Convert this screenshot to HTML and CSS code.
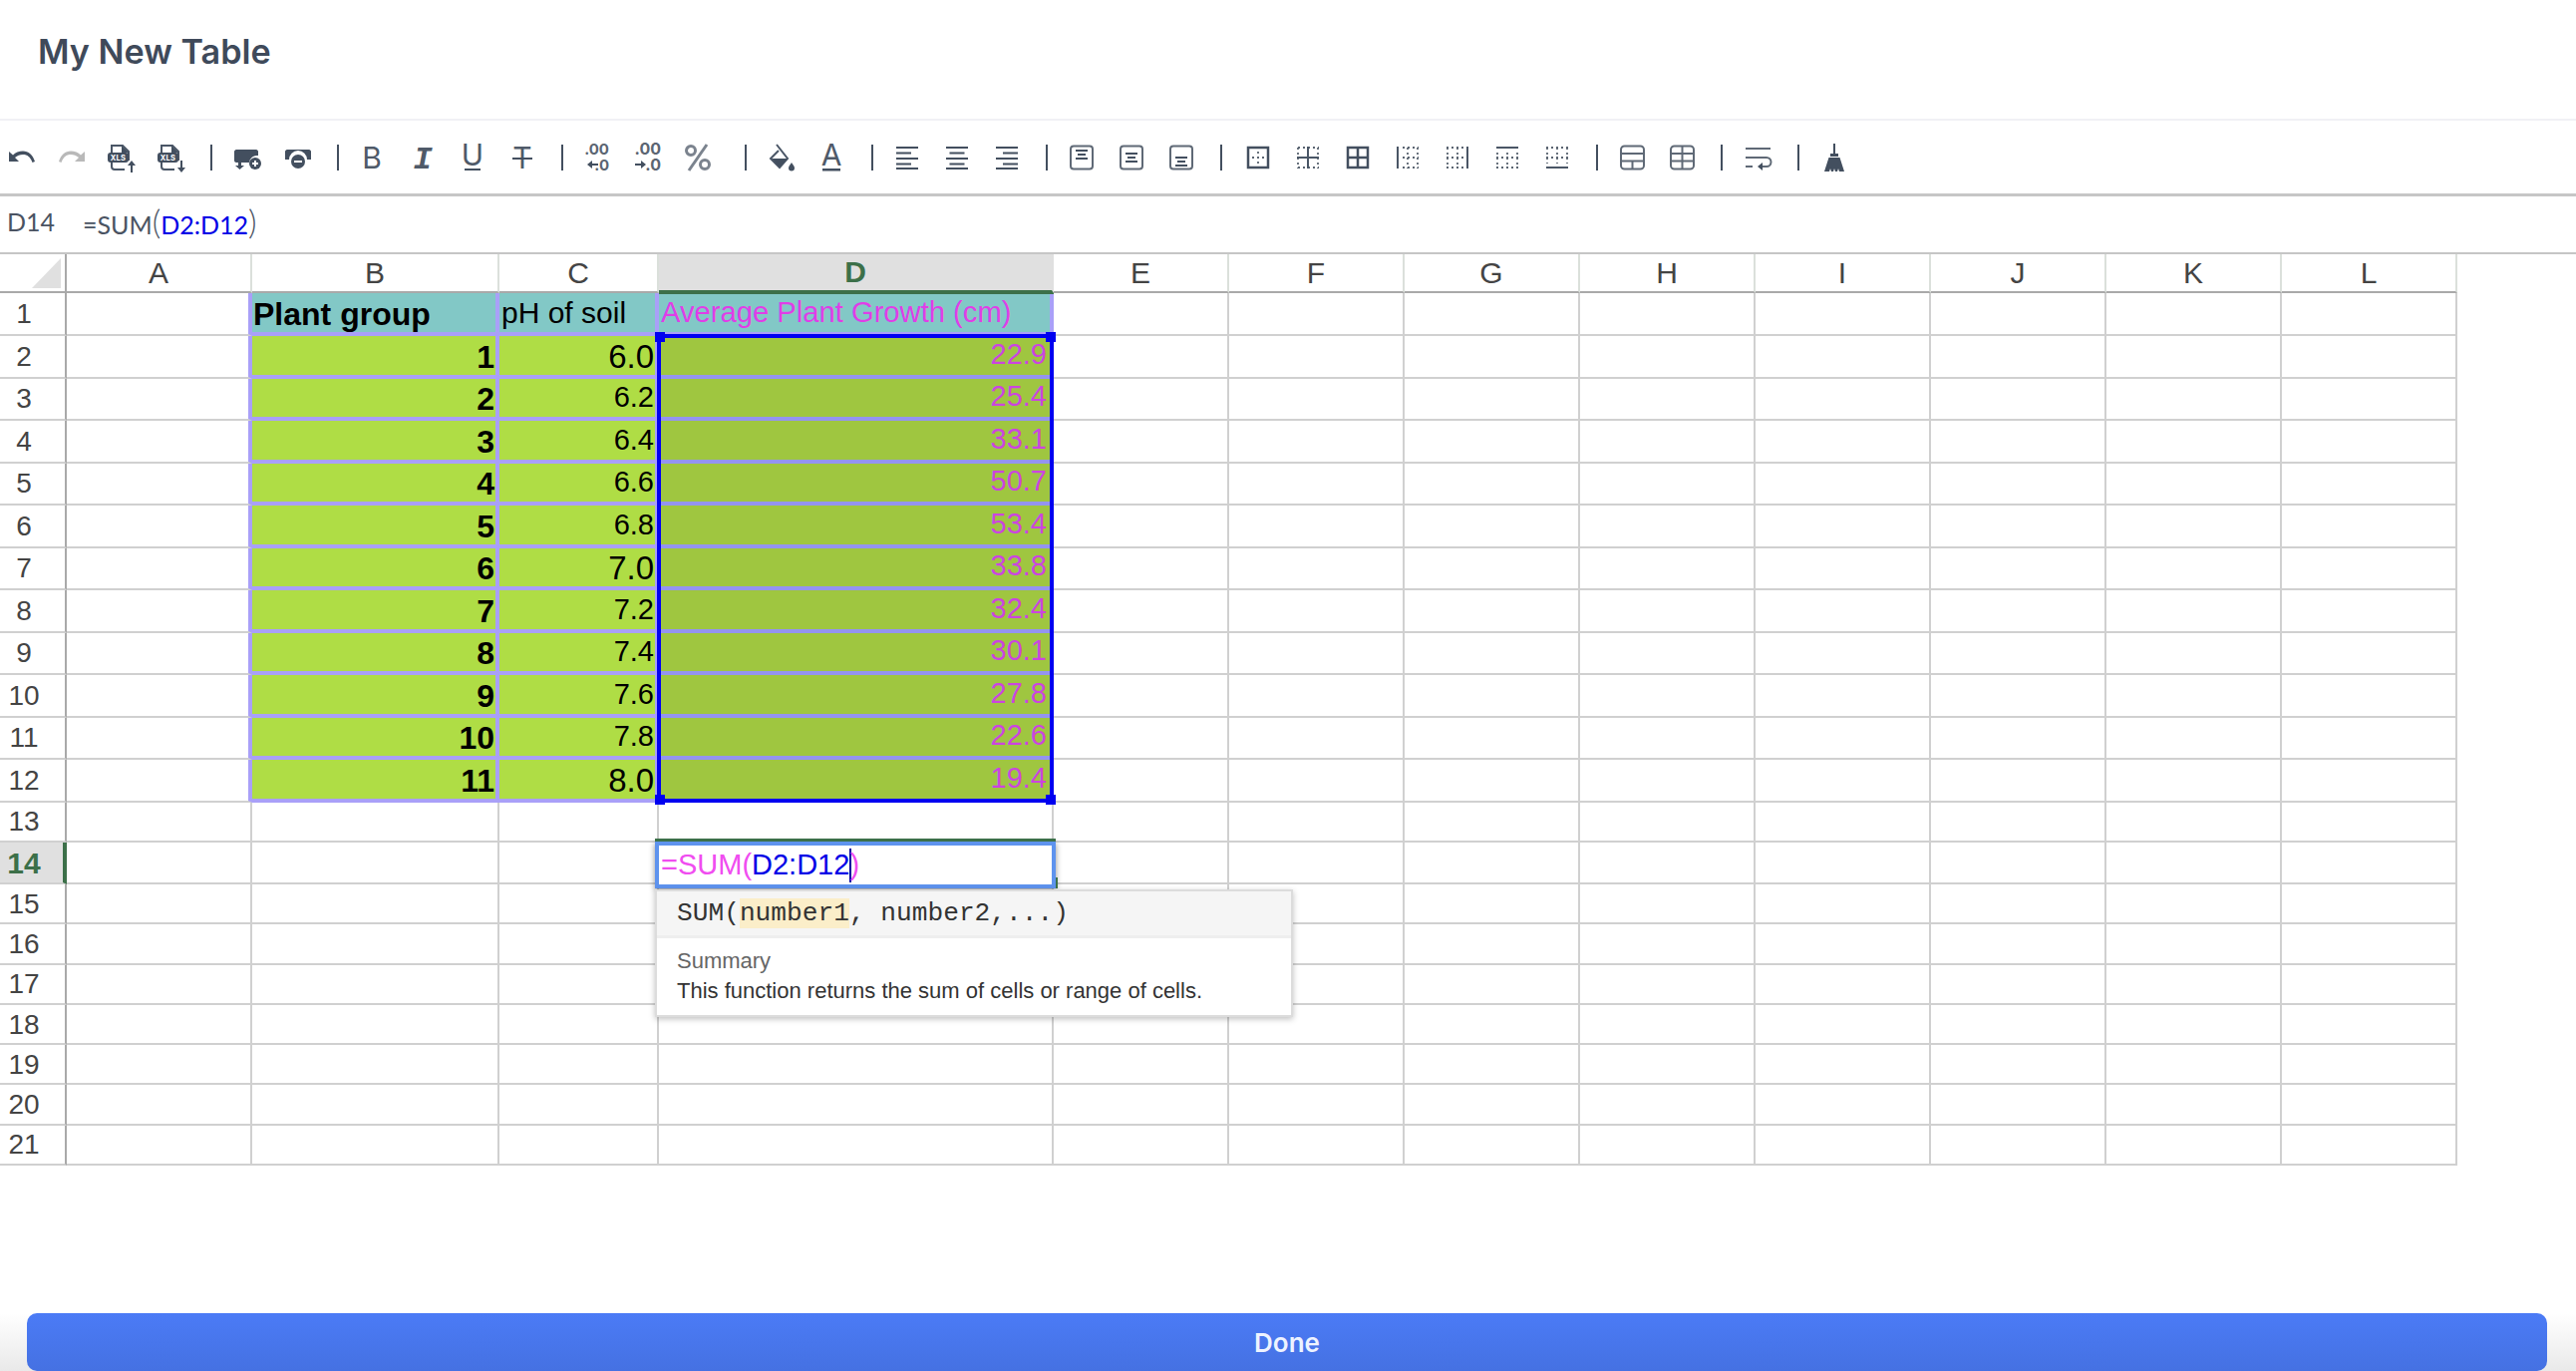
FILE: index.html
```html
<!DOCTYPE html>
<html lang="en">
<head>
<meta charset="utf-8">
<title>My New Table</title>
<link rel="stylesheet" href="styles.css">
</head>
<body>
<header class="title-bar"><h1 class="title">My New Table</h1></header>

<div class="toolbar">
  <span class="tool"><svg class="ic" viewBox="0 0 30 30"><path d="M2 9v10h10l-4-4c2.500-2 5-3 8-3 4.500 0 7.500 2.500 9.500 8l2.500-1c-2-6.500-6.500-10.500-12-10.500-4 0-7.500 1.500-10 4z"/></svg></span>
  <span class="tool"><svg class="ic off" viewBox="0 0 30 30"><path d="M28 9v10H18l4-4c-2.500-2-5-3-8-3-4.500 0-7.500 2.500-9.500 8L2 19c2-6.500 6.500-10.500 12-10.500 4 0 7.500 1.500 10 4z"/></svg></span>
  <span class="tool"><svg class="ic" viewBox="0 0 30 30"><path class="st" d="M5 10V3h11l6 6v9M5 19v5c0 2 1 3 3 3h10"/><path d="M15 3v7h7z"/><rect x="1" y="10" width="21" height="10" rx="3"/><text class="xls" x="11.500" y="18">XLS</text><path d="M25 18l4 5h-3v7h-2v-7h-3z"/></svg></span>
  <span class="tool"><svg class="ic" viewBox="0 0 30 30"><path class="st" d="M5 10V3h11l6 6v9M5 19v5c0 2 1 3 3 3h10"/><path d="M15 3v7h7z"/><rect x="1" y="10" width="21" height="10" rx="3"/><text class="xls" x="11.500" y="18">XLS</text><path d="M24 18h2v7h3l-4 5-4-5h3z"/></svg></span>
  <span class="sep sep-wide"></span>
  <span class="tool"><svg class="ic" viewBox="0 0 30 30"><path d="M1 9c0-1 1-2 2-2h20c1 0 2 1 2 2v4a8 8 0 0 0-9 7H8v3h3l-4.500 4L2 23h3v-3H3c-1 0-2-1-2-2z"/><circle cx="22" cy="21" r="6"/><path class="wt" d="M19 21h6M22 18v6"/></svg></span>
  <span class="tool"><svg class="ic" viewBox="0 0 30 30"><path d="M2 9c0-1 1-2 2-2h22c1 0 2 1 2 2v8h-4a9 9 0 0 0-18 0H2z"/><circle cx="15" cy="19" r="7"/><path class="wt" d="M11 19h8"/></svg></span>
  <span class="sep sep-narrow"></span>
  <span class="tool"><svg class="ic" viewBox="0 0 30 30"><text class="glyph" x="14" y="26">B</text></svg></span>
  <span class="tool"><svg class="ic" viewBox="0 0 30 30"><text class="glyph glyph-i" x="15" y="26">I</text></svg></span>
  <span class="tool"><svg class="ic" viewBox="0 0 30 30"><text class="glyph" x="15" y="23">U</text><path d="M7 26h16v2H7z"/></svg></span>
  <span class="tool"><svg class="ic" viewBox="0 0 30 30"><text class="glyph" x="15" y="26">T</text><path d="M5 15h20v2H5z"/></svg></span>
  <span class="sep"></span>
  <span class="tool"><svg class="ic" viewBox="0 0 30 30"><text class="dec" x="26" y="12">.00</text><text class="dec" x="26" y="28">.0</text><path d="M4 22l5-4v3h6v2H9v3z"/></svg></span>
  <span class="tool"><svg class="ic" viewBox="0 0 30 30"><text class="dec dec-b" x="28" y="12">.00</text><text class="dec dec-b" x="28" y="28">.0</text><path d="M13 22l-5 4v-3H2v-2h6v-3z"/></svg></span>
  <span class="tool"><svg class="ic pct" viewBox="0 0 30 30"><circle class="st2" cx="8" cy="8" r="4.500"/><circle class="st2" cx="22" cy="22" r="4.500"/><path class="st2" d="M24 2L6 28"/></svg></span>
  <span class="sep sep-gap"></span>
  <span class="tool"><svg class="ic" viewBox="0 0 30 30"><path class="st" d="M9 2l11 14-8 9-9-9 8-8"/><path d="M4 16h16l-8 9z"/><path d="M24 20c2 3 3 4 3 5.500a3 3 0 0 1-6 0c0-1.500 1-2.500 3-5.500z"/></svg></span>
  <span class="tool"><svg class="ic" viewBox="0 0 30 30"><text class="glyph" x="14" y="23">A</text><path d="M5 26h18v2.500H5z"/></svg></span>
  <span class="sep sep-narrow"></span>
  <span class="tool"><svg class="ic" viewBox="0 0 30 30"><path d="M4 4h22v2H4zM4 9.500h15v2H4zM4 15h22v2H4zM4 20.500h15v2H4zM4 25h22v2H4z"/></svg></span>
  <span class="tool"><svg class="ic" viewBox="0 0 30 30"><path d="M4 4h22v2H4zM7.500 9.500h15v2h-15zM4 15h22v2H4zM7.500 20.500h15v2h-15zM4 25h22v2H4z"/></svg></span>
  <span class="tool"><svg class="ic" viewBox="0 0 30 30"><path d="M4 4h22v2H4zM11 9.500h15v2H11zM4 15h22v2H4zM11 20.500h15v2H11zM4 25h22v2H4z"/></svg></span>
  <span class="sep sep-narrow"></span>
  <span class="tool"><svg class="ic" viewBox="0 0 30 30"><rect class="box" x="4" y="3.500" width="22" height="23" rx="3"/><path d="M9 7h12v2H9zM11 11h8v2h-8zM9 15h12v2H9z"/></svg></span>
  <span class="tool"><svg class="ic" viewBox="0 0 30 30"><rect class="box" x="4" y="3.500" width="22" height="23" rx="3"/><path d="M9 10h12v2H9zM11 14h8v2h-8zM9 18h12v2H9z"/></svg></span>
  <span class="tool"><svg class="ic" viewBox="0 0 30 30"><rect class="box" x="4" y="3.500" width="22" height="23" rx="3"/><path d="M9 14h12v2H9zM11 18h8v2h-8zM9 22h12v2H9z"/></svg></span>
  <span class="sep sep-wide"></span>
  <span class="tool"><svg class="ic" viewBox="0 0 30 30"><rect class="st3" x="5" y="5" width="20" height="20"/><path class="dots" d="M15 9v13M9 15h13"/></svg></span>
  <span class="tool"><svg class="ic" viewBox="0 0 30 30"><path class="dots" d="M5 5h21M5 25h21M5 5v21M25 5v21"/><path class="st" d="M15 4v22M4 15h22"/></svg></span>
  <span class="tool"><svg class="ic" viewBox="0 0 30 30"><rect class="st3" x="5" y="5" width="20" height="20"/><path class="st3" d="M15 5v20M5 15h20"/></svg></span>
  <span class="tool"><svg class="ic" viewBox="0 0 30 30"><path class="dots" d="M10 5h16M10 15h16M10 25h16M15 5v21M25 5v21"/><path class="st" d="M5 4v22"/></svg></span>
  <span class="tool"><svg class="ic" viewBox="0 0 30 30"><path class="dots" d="M4 5h17M4 15h17M4 25h17M5 5v21M15 5v21"/><path class="st" d="M25 4v22"/></svg></span>
  <span class="tool"><svg class="ic" viewBox="0 0 30 30"><path class="dots" d="M4 15h22M4 25h22M5 10v16M15 10v16M25 10v16"/><path class="st" d="M4 5h22"/></svg></span>
  <span class="tool"><svg class="ic" viewBox="0 0 30 30"><path class="dots" d="M4 5h22M4 15h22M5 5v16M15 5v16M25 5v16"/><path class="st" d="M4 25h22"/></svg></span>
  <span class="sep sep-narrow"></span>
  <span class="tool"><svg class="ic" viewBox="0 0 30 30"><rect class="box" x="4" y="3.500" width="23" height="23" rx="3.500"/><path class="box" d="M4 11h23M4 18.500h23M15.500 18.500v8"/></svg></span>
  <span class="tool"><svg class="ic" viewBox="0 0 30 30"><rect class="box" x="4" y="3.500" width="23" height="23" rx="3.500"/><path class="box" d="M4 11h23M4 18.500h23M15.500 3.500v23"/></svg></span>
  <span class="sep sep-wide"></span>
  <span class="tool"><svg class="ic" viewBox="0 0 30 30"><path class="box" d="M2 6h25M2 15h21a4 4 0 0 1 0 9h-6M2 24h7"/><path d="M19 20v8l-5-4z"/></svg></span>
  <span class="sep"></span>
  <span class="tool"><svg class="ic" viewBox="0 0 30 30"><path d="M14 1h2v11h-2zM11 11h8v3h-8zM9.500 15h11L25 29h-5l-1-3-1 3h-2l-1-3-1 3h-2l-1-3-1 3H5z"/></svg></span>
</div>

<div class="formula-bar">
  <span class="cell-ref">D14</span>
  <span class="formula">=SUM<span class="paren">(</span><span class="range">D2:D12</span><span class="paren">)</span></span>
</div>

<main class="sheet">
  <div class="corner"><svg class="corner-mark" viewBox="0 0 29 30"><path d="M29 0v30H0z"/></svg></div>
  <div class="ch">A</div><div class="ch">B</div><div class="ch">C</div><div class="ch ch-on">D</div><div class="ch">E</div><div class="ch">F</div><div class="ch">G</div><div class="ch">H</div><div class="ch">I</div><div class="ch">J</div><div class="ch">K</div><div class="ch">L</div>

  <div class="rh">1</div><div class="pe"></div><div class="t tb">Plant group</div><div class="t tc">pH of soil</div><div class="t tm">Average Plant Growth (cm)</div><div></div><div></div><div></div><div></div><div></div><div></div><div></div><div></div>
  <div class="rh">2</div><div class="pe"></div><div class="g b">1</div><div class="g n big">6.0</div><div class="s">22.9</div><div></div><div></div><div></div><div></div><div></div><div></div><div></div><div></div>
  <div class="rh">3</div><div class="pe"></div><div class="g b">2</div><div class="g n">6.2</div><div class="s">25.4</div><div></div><div></div><div></div><div></div><div></div><div></div><div></div><div></div>
  <div class="rh">4</div><div class="pe"></div><div class="g b">3</div><div class="g n">6.4</div><div class="s">33.1</div><div></div><div></div><div></div><div></div><div></div><div></div><div></div><div></div>
  <div class="rh">5</div><div class="pe"></div><div class="g b">4</div><div class="g n">6.6</div><div class="s">50.7</div><div></div><div></div><div></div><div></div><div></div><div></div><div></div><div></div>
  <div class="rh">6</div><div class="pe"></div><div class="g b">5</div><div class="g n">6.8</div><div class="s">53.4</div><div></div><div></div><div></div><div></div><div></div><div></div><div></div><div></div>
  <div class="rh">7</div><div class="pe"></div><div class="g b">6</div><div class="g n big">7.0</div><div class="s">33.8</div><div></div><div></div><div></div><div></div><div></div><div></div><div></div><div></div>
  <div class="rh">8</div><div class="pe"></div><div class="g b">7</div><div class="g n">7.2</div><div class="s">32.4</div><div></div><div></div><div></div><div></div><div></div><div></div><div></div><div></div>
  <div class="rh">9</div><div class="pe"></div><div class="g b">8</div><div class="g n">7.4</div><div class="s">30.1</div><div></div><div></div><div></div><div></div><div></div><div></div><div></div><div></div>
  <div class="rh">10</div><div class="pe"></div><div class="g b">9</div><div class="g n">7.6</div><div class="s">27.8</div><div></div><div></div><div></div><div></div><div></div><div></div><div></div><div></div>
  <div class="rh">11</div><div class="pe"></div><div class="g b">10</div><div class="g n">7.8</div><div class="s">22.6</div><div></div><div></div><div></div><div></div><div></div><div></div><div></div><div></div>
  <div class="rh">12</div><div class="pe"></div><div class="g b">11</div><div class="g n big">8.0</div><div class="s">19.4</div><div></div><div></div><div></div><div></div><div></div><div></div><div></div><div></div>
  <div class="rh">13</div><div></div><div></div><div></div><div></div><div></div><div></div><div></div><div></div><div></div><div></div><div></div><div></div>
  <div class="rh rh-on">14</div><div></div><div></div><div></div><div></div><div></div><div></div><div></div><div></div><div></div><div></div><div></div><div></div>
  <div class="rh">15</div><div></div><div></div><div></div><div></div><div></div><div></div><div></div><div></div><div></div><div></div><div></div><div></div>
  <div class="rh">16</div><div></div><div></div><div></div><div></div><div></div><div></div><div></div><div></div><div></div><div></div><div></div><div></div>
  <div class="rh">17</div><div></div><div></div><div></div><div></div><div></div><div></div><div></div><div></div><div></div><div></div><div></div><div></div>
  <div class="rh">18</div><div></div><div></div><div></div><div></div><div></div><div></div><div></div><div></div><div></div><div></div><div></div><div></div>
  <div class="rh">19</div><div></div><div></div><div></div><div></div><div></div><div></div><div></div><div></div><div></div><div></div><div></div><div></div>
  <div class="rh">20</div><div></div><div></div><div></div><div></div><div></div><div></div><div></div><div></div><div></div><div></div><div></div><div></div>
  <div class="rh">21</div><div></div><div></div><div></div><div></div><div></div><div></div><div></div><div></div><div></div><div></div><div></div><div></div>

  <span class="selection"><span class="h h1"></span><span class="h h2"></span><span class="h h3"></span><span class="h h4"></span></span>
  <span class="editor"><span class="fn">=SUM(</span><span class="rng">D2:D12</span><span class="caret"></span><span class="fn">)</span></span>
  <section class="popup">
    <div class="sig">SUM(<span class="arg">number1</span>, number2,...)</div>
    <div class="help"><p class="help-h">Summary</p><p class="help-t">This function returns the sum of cells or range of cells.</p></div>
  </section>
</main>

<footer class="footer"><button class="done">Done</button></footer>
</body>
</html>
```
FILE: styles.css
```css
html, body { margin: 0; height: 100%; }
body { display: flex; flex-direction: column; height: 1375px; overflow: hidden; background: #fff; font-family: "Liberation Sans", Arial, sans-serif; color: #000; }

.title-bar { height: 119px; flex: none; display: flex; align-items: center; padding-left: 38px; border-bottom: 2px solid #f1f1f5; }
.title { margin: 0 0 15px; font: 600 34.200px/1 Inter, "Liberation Sans", sans-serif; color: #3f4a5a; }

.toolbar { height: 73px; flex: none; display: flex; align-items: center; margin-left: -3px; border-bottom: 3px solid #c6c6c6; }
.tool { width: 50px; height: 30px; flex: none; display: flex; justify-content: center; }
.sep { width: 2px; height: 26px; flex: none; background: #434f5f; margin: 0 10px 0 14px; }
.sep-narrow { margin-right: 9px; }
.sep-wide { margin-right: 11px; }
.sep-gap { margin: 0 11px 0 22px; }

.ic { width: 30px; height: 30px; fill: #434f5f; overflow: visible; }
.ic.off { fill: #b9b9b9; }
.ic .st { fill: none; stroke: #4a5666; stroke-width: 2; }
.ic .st3 { fill: none; stroke: #434f5f; stroke-width: 2.500; }
.ic .st2 { fill: none; stroke: #7b838e; stroke-width: 3; }
.ic .box { fill: none; stroke: #5f6976; stroke-width: 2; }
.ic .wt { fill: none; stroke: #fff; stroke-width: 2; }
.ic .dots { fill: none; stroke: #5b6572; stroke-width: 1.800; stroke-dasharray: 2 3; }
.ic .xls { fill: #fff; font: 700 7.500px Inter, sans-serif; text-anchor: middle; letter-spacing: .3px; }
.ic .glyph { fill: #4f5a69; font: 400 30px Inter, sans-serif; text-anchor: middle; }
.ic .glyph-i { font: italic 700 32px "Liberation Mono", monospace; }
.ic .dec { fill: #5b6572; font: 700 15px Inter, sans-serif; text-anchor: end; }
.ic .dec-b { font-size: 16px; }

.formula-bar { height: 58px; box-sizing: border-box; flex: none; display: flex; align-items: center; padding: 0 0 6px 7px; border-bottom: 2px solid #c6c6c6; font: 400 25px Lato, sans-serif; color: #4a5362; }
.cell-ref { width: 76px; flex: none; }
.paren { font-size: 33px; font-weight: 300; }
.range { color: #0000e6; }

.sheet { position: relative; flex: none; display: grid; width: 2465px; grid-template-columns: 67px 186px 248px 160px 396px repeat(8, 176px); grid-template-rows: 39px 43px repeat(11, 42.500px) 40.500px 42px repeat(7, 40.300px); font-size: 29px; }
.sheet > div { box-sizing: border-box; min-width: 0; display: flex; align-items: center; white-space: nowrap; border-right: 2px solid #d0d0d0; border-bottom: 2px solid #d0d0d0; }

.sheet > .corner { position: relative; border-right-color: #a9a9a9; border-bottom-color: #a9a9a9; }
.corner-mark { position: absolute; left: 32px; top: 4px; width: 29px; height: 30px; fill: #e0e0e0; }
.sheet > .ch { justify-content: center; font-size: 30px; color: #444; border-right-color: #dbe0db; border-bottom-color: #a9a9a9; }
.sheet > .ch-on { position: relative; z-index: 1; font-weight: 700; color: #3c7049; background: #e0e0e0; border-right-color: #e0e0e0; border-bottom: 3px solid #3c7049; box-shadow: 0 1px 0 #3c7049; }
.sheet > .rh { justify-content: center; padding: 1px 17px 0 0; font-size: 28px; color: #444; border-right-color: #a9a9a9; }
.sheet > .rh-on { font-weight: 700; font-size: 30px; color: #3c7049; background: #e0e0e0; padding-right: 15px; border-right: 4px solid #3c7049; }
.sheet > .pe { border-right: 4px solid #a9a0f8; }

.sheet > .t { padding-left: 1px; background: #82c8c6; border-right: 4px solid #a9a0f8; border-bottom: 4px solid #a9a0f8; }
.sheet > .tb { font-size: 32px; font-weight: 700; padding-top: 4px; }
.sheet > .tc { font-size: 30px; padding-left: 2px; }
.sheet > .tm { color: #e03de8; font-size: 29.200px; padding-left: 2px; }
.sheet > .g, .sheet > .s { justify-content: flex-end; border-right: 4px solid #a9a0f8; border-bottom: 4px solid #a9a0f8; }
.sheet > .g { background: #afdd45; padding-right: 1px; }
.sheet > .b { font-size: 32px; font-weight: 700; padding-top: 4px; }
.sheet > .n { padding-right: 1px; }
.sheet > .big { font-size: 33px; padding-top: 3px; }
.sheet > .s { background: #9fc640; color: #cc44e0; padding: 0 3px 2px 0; border-bottom-color: #9494f0; }

.selection { position: absolute; left: 659px; top: 80px; width: 398px; height: 470px; box-sizing: border-box; border: 4px solid #0000f0; }
.h { position: absolute; width: 10px; height: 10px; background: #0000f0; }
.h1 { left: -6px; top: -6px; }
.h2 { right: -6px; top: -6px; }
.h3 { left: -6px; bottom: -6px; }
.h4 { right: -6px; bottom: -6px; }

.editor { position: absolute; left: 657px; top: 589px; width: 402px; height: 47px; box-sizing: border-box; display: flex; align-items: center; padding-left: 2px; background: #fff; border: 4px solid #5e93ee; box-shadow: 0 -3px 0 #3c7049, 0 2px 6px rgba(0, 0, 0, .45); font-size: 29px; }
.editor::after { content: ""; position: absolute; right: -6px; bottom: -4px; width: 2px; height: 11px; background: #3c7049; }
.fn { color: #f04df0; }
.rng { color: #0000e6; }
.caret { width: 2px; height: 34px; margin: 0 -2px 0 0; background: #0000a0; }

.popup { position: absolute; left: 657px; top: 637px; width: 640px; height: 128px; box-sizing: border-box; background: #fff; border: 2px solid #dcdcdc; box-shadow: 0 2px 6px rgba(0, 0, 0, .25); }
.sig { height: 44px; display: flex; align-items: center; padding-left: 20px; white-space: pre; background: #f5f5f5; border-bottom: 3px solid #eee; font: 400 26.200px "Liberation Mono", monospace; color: #333; }
.arg { background: #fbeec9; line-height: 30px; }
.help { padding: 10px 20px 0; font-size: 22px; }
.help-h { margin: 0 0 4px; line-height: 26px; color: #666; }
.help-t { margin: 0; line-height: 26px; color: #333; }

.footer { margin-top: auto; height: 58px; flex: none; padding: 0 29px 0 27px; background: linear-gradient(#fff, #e9e9e9); }
.done { display: block; width: 100%; height: 58px; border: 0; border-radius: 10px; background: linear-gradient(#4b7bf6, #4571e2); color: #eef3ff; font: 600 26px Inter, sans-serif; }
```
